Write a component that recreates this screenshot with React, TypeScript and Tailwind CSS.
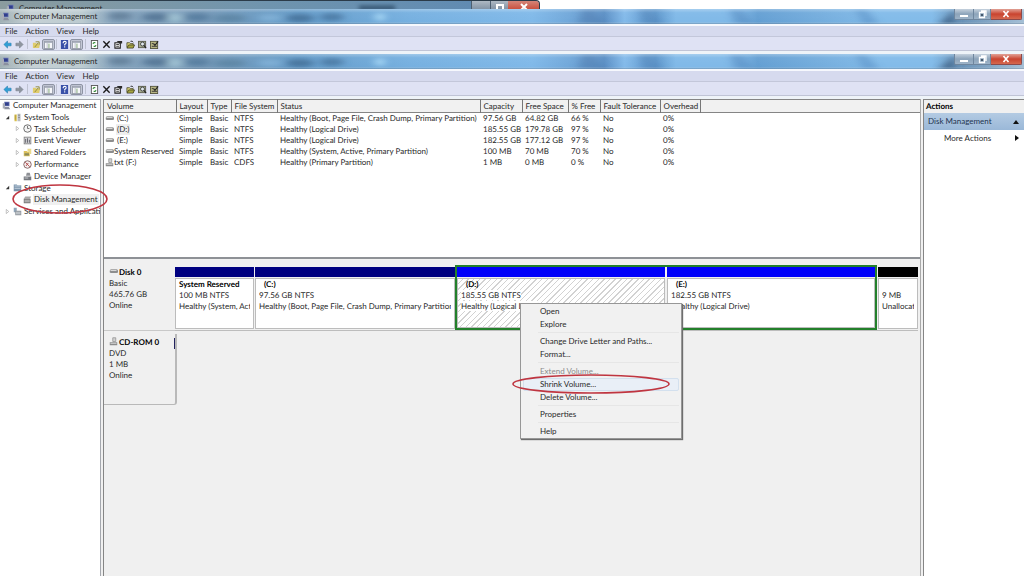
import { Fragment, type ReactNode } from "react";
import clsx from "clsx";

const MENUS = ["File", "Action", "View", "Help"];

const VOLUMES = [
  { name: "(C:)", icon: "drive", fs: "NTFS", status: "Healthy (Boot, Page File, Crash Dump, Primary Partition)", capacity: "97.56 GB", free: "64.82 GB", pct: "66 %" },
  { name: "(D:)", icon: "drive", fs: "NTFS", status: "Healthy (Logical Drive)", capacity: "185.55 GB", free: "179.78 GB", pct: "97 %", selected: true },
  { name: "(E:)", icon: "drive", fs: "NTFS", status: "Healthy (Logical Drive)", capacity: "182.55 GB", free: "177.12 GB", pct: "97 %" },
  { name: "System Reserved", icon: "drive", fs: "NTFS", status: "Healthy (System, Active, Primary Partition)", capacity: "100 MB", free: "70 MB", pct: "70 %" },
  { name: "txt (F:)", icon: "cd", fs: "CDFS", status: "Healthy (Primary Partition)", capacity: "1 MB", free: "0 MB", pct: "0 %" },
];

const COLUMNS = [
  { label: "Volume", width: "w-[72px]" },
  { label: "Layout", width: "w-[31px]" },
  { label: "Type", width: "w-[24px]" },
  { label: "File System", width: "w-[46px]" },
  { label: "Status", width: "w-[203px]" },
  { label: "Capacity", width: "w-[42px]" },
  { label: "Free Space", width: "w-[46px]" },
  { label: "% Free", width: "w-[32px]" },
  { label: "Fault Tolerance", width: "w-[60px]" },
  { label: "Overhead", width: "w-[40px]" },
];

const TREE = [
  { label: "Computer Management", level: 0, arrow: "", icon: "computer" },
  { label: "System Tools", level: 1, arrow: "open", icon: "tools" },
  { label: "Task Scheduler", level: 2, arrow: "closed", icon: "clock" },
  { label: "Event Viewer", level: 2, arrow: "closed", icon: "event" },
  { label: "Shared Folders", level: 2, arrow: "closed", icon: "folder" },
  { label: "Performance", level: 2, arrow: "closed", icon: "perf" },
  { label: "Device Manager", level: 2, arrow: "", icon: "device" },
  { label: "Storage", level: 1, arrow: "open", icon: "storage" },
  { label: "Disk Management", level: 2, arrow: "", icon: "disk", selected: true },
  { label: "Services and Applications", level: 1, arrow: "closed", icon: "services" },
];

const CONTEXT_MENU = [
  ["Open", "Explore"],
  ["Change Drive Letter and Paths...", "Format..."],
  ["Extend Volume...", "Shrink Volume...", "Delete Volume..."],
  ["Properties"],
  ["Help"],
];

const ICONS: Record<string, ReactNode> = {
  computer: (
    <>
      <rect x="3" y="1" width="7" height="6" fill="#6a76b4" />
      <rect x="4" y="2" width="5" height="4" fill="#303f8c" />
      <rect x="1" y="3" width="3" height="7" fill="#a9adb8" />
      <path d="M4 8h5l2 3H3z" fill="#8b90a0" />
    </>
  ),
  tools: (
    <>
      <rect x="2" y="2" width="3" height="9" fill="#d9c04c" />
      <rect x="6" y="1" width="4" height="10" fill="#b9bcc0" />
      <path d="M7 3h2M7 6h2" stroke="#777" />
      <path d="M3 3v6" stroke="#a8903c" />
    </>
  ),
  clock: (
    <>
      <circle cx="6" cy="6" r="5" fill="#f4f4f4" stroke="#6f6f6f" strokeWidth="1.3" />
      <path d="M6 2.5V6h2.5" fill="none" stroke="#555" />
    </>
  ),
  event: (
    <>
      <rect x="1.5" y="1.5" width="9" height="9" fill="#d5d5d8" stroke="#777" />
      <path d="M3.5 4v5M6 3v6M8.5 5v4" stroke="#5d5d66" strokeWidth="1.2" />
    </>
  ),
  folder: (
    <>
      <path d="M1 4h4l1 1h3v6H1z" fill="#dcc15c" />
      <path d="M2 7h6v3H2z" fill="#8d8a58" />
      <path d="M6 1h5v7H8V5H6z" fill="#ead98b" />
    </>
  ),
  perf: (
    <>
      <circle cx="6" cy="6" r="5" fill="#f5eeee" stroke="#8b6a6a" strokeWidth="1.3" />
      <path d="M3 3l6 6M4 8l3-4" stroke="#b24848" strokeWidth="1.2" />
    </>
  ),
  device: (
    <>
      <path d="M5 1h4l1 4H4z" fill="#8d8f94" />
      <rect x="1" y="6" width="10" height="5" fill="#74777d" />
      <path d="M2 8h5" stroke="#dfe2e6" />
    </>
  ),
  storage: (
    <>
      <path d="M1 2h4l1 1h5v8H1z" fill="#7b93ab" />
      <path d="M2 4h8M2 7h8" stroke="#dce7f0" />
    </>
  ),
  disk: (
    <>
      <path d="M3 2h8l-2 3H1z" fill="#a9a9a9" />
      <rect x="1" y="5" width="9" height="6" fill="#777" />
      <path d="M2 7h7M2 9h7" stroke="#d5d5d5" />
    </>
  ),
  services: (
    <>
      <rect x="1" y="1" width="4" height="6" fill="#90a5b8" />
      <rect x="3" y="5" width="8" height="6" fill="#8f959c" />
      <path d="M4 7h6M4 9h6" stroke="#e0e5ea" />
    </>
  ),
  drive: (
    <>
      <path d="M1 5q0-2 2-2h7q2 0 2 2v2q0 1-2 1H3Q1 8 1 7z" fill="#8d8d8d" />
      <path d="M2 4.5h8" stroke="#e4e4e4" strokeWidth="1.3" />
    </>
  ),
  cd: (
    <>
      <path d="M5 1h4v5H5z" fill="#d2d2d2" stroke="#909090" />
      <rect x="1" y="7" width="10" height="4" fill="#8b8b8b" />
      <path d="M2 8.5h8" stroke="#e2e2e2" />
    </>
  ),
};

function Icon({ name, className = "size-[9px]" }: { name: string; className?: string }) {
  return (
    <svg viewBox="0 0 12 12" className={clsx("shrink-0", className)} aria-hidden="true">
      {ICONS[name]}
    </svg>
  );
}

// Aero glass: the blurred desktop behind each title bar
function Glass({ id }: { id: string }) {
  return (
    <svg className="absolute inset-0 size-full" viewBox="0 0 1024 15" preserveAspectRatio="none" aria-hidden="true">
      <defs>
        <linearGradient id={`${id}-base`}>
          <stop offset="0" stopColor="#a0b0b4" />
          <stop offset="0.03" stopColor="#c6d1d5" />
          <stop offset="0.08" stopColor="#bccbd0" />
          <stop offset="0.11" stopColor="#86a4bd" />
          <stop offset="0.2" stopColor="#7599b8" />
          <stop offset="0.29" stopColor="#649bc8" />
          <stop offset="0.4" stopColor="#76b0e0" />
          <stop offset="0.52" stopColor="#80b9e9" />
          <stop offset="0.57" stopColor="#6ba1d4" />
          <stop offset="0.59" stopColor="#5b8fc5" />
          <stop offset="0.61" stopColor="#83baea" />
          <stop offset="0.64" stopColor="#5e97cc" />
          <stop offset="0.66" stopColor="#80b9e8" />
          <stop offset="0.72" stopColor="#80b9e8" />
          <stop offset="0.74" stopColor="#649fd3" />
          <stop offset="0.8" stopColor="#74addd" />
          <stop offset="0.86" stopColor="#82bbe9" />
          <stop offset="0.91" stopColor="#82bbe9" />
          <stop offset="0.94" stopColor="#6a93b8" />
          <stop offset="1" stopColor="#a4bfd6" />
        </linearGradient>
        <linearGradient id={`${id}-shine`} x2="0" y2="1">
          <stop offset="0" stopColor="#fff" stopOpacity="0.3" />
          <stop offset="0.25" stopColor="#fff" stopOpacity="0.04" />
          <stop offset="0.85" stopColor="#fff" stopOpacity="0" />
          <stop offset="1" stopColor="#47627c" stopOpacity="0.5" />
        </linearGradient>
        <filter id={`${id}-blur`} x="-20%" y="-50%" width="140%" height="200%">
          <feGaussianBlur stdDeviation="4 2" />
        </filter>
      </defs>
      <rect width="1024" height="15" fill={`url(#${id}-base)`} />
      <g filter={`url(#${id}-blur)`} opacity="0.75">
        <ellipse cx="120" cy="7" rx="12" ry="4" fill="#587590" />
        <ellipse cx="156" cy="8" rx="14" ry="4" fill="#47698a" />
        <ellipse cx="175" cy="9" rx="7" ry="5" fill="#a9ccd9" />
        <ellipse cx="197" cy="8" rx="13" ry="4" fill="#4c7397" />
        <ellipse cx="230" cy="9" rx="16" ry="4" fill="#57809f" />
        <ellipse cx="270" cy="9" rx="12" ry="4" fill="#83b4da" />
        <ellipse cx="300" cy="9" rx="14" ry="4" fill="#3e6890" />
        <ellipse cx="332" cy="8" rx="12" ry="4" fill="#426f9a" />
        <ellipse cx="380" cy="8" rx="5" ry="4" fill="#b8e6ff" />
        <path d="M582 0h10l14 15h-28z" fill="#5484b8" />
        <path d="M640 0h10l12 15h-20z" fill="#568bc0" />
        <path d="M730 0h12l12 15h-20z" fill="#5b93c8" />
        <path d="M855 0h10l14 15h-16z" fill="#6299cd" />
        <path d="M955 1v14h-16z" fill="#39597c" />
      </g>
      <rect width="1024" height="15" fill={`url(#${id}-shine)`} />
    </svg>
  );
}

function WindowButtons() {
  return (
    <div className="relative mr-[2px] flex h-[11px] self-start">
      <button aria-label="Minimize" className="flex w-[20px] items-end justify-center rounded-bl-[2px] border border-t-0 border-[#6f869e] bg-linear-to-b from-[#c5d1dd] via-[#8da4ba] to-[#9db3c8] pb-[2px]">
        <span className="h-[2px] w-[8px] bg-white" />
      </button>
      <button aria-label="Restore" className="flex w-[17px] items-center justify-center border border-t-0 border-l-0 border-[#6f869e] bg-linear-to-b from-[#c5d1dd] via-[#8da4ba] to-[#9db3c8]">
        <svg viewBox="0 0 9 9" className="size-[9px]" aria-hidden="true">
          <path d="M3 1h5v5M1.5 2.5h5v5h-5z" fill="none" stroke="#fff" strokeWidth="1.3" />
          <rect x="3" y="4" width="2" height="2" fill="#45586c" />
        </svg>
      </button>
      <button aria-label="Close" className="flex w-[31px] items-center justify-center rounded-br-[2px] border border-t-0 border-l-0 border-[#8d4a4a] bg-linear-to-b from-[#e0a095] via-[#c9432f] to-[#d5684f]">
        <svg viewBox="0 0 8 8" className="size-[8px]" aria-hidden="true">
          <path d="M1.5 1l5 6M6.5 1l-5 6" stroke="#fff" strokeWidth="1.6" />
        </svg>
      </button>
    </div>
  );
}

function ToolButton({ label, pressed, children }: { label: string; pressed?: boolean; children: ReactNode }) {
  return (
    <button
      aria-label={label}
      className={clsx(
        "flex h-[11px] items-center justify-center",
        pressed ? "w-[13px] rounded-[2px] border border-[#8d93a3] bg-[#c3c8d6]" : "w-[12px]",
      )}
    >
      <svg viewBox="0 0 10 10" className="size-[9px]" aria-hidden="true">{children}</svg>
    </button>
  );
}

function PanelGlyph() {
  return (
    <>
      <rect x="0.5" y="1.5" width="9" height="8" fill="#f6f7fa" stroke="#9a9fac" />
      <path d="M1 2.5h8" stroke="#8c93a5" />
      <path d="M5.5 4v5" stroke="#7aa46e" />
      <path d="M3.5 3v6" stroke="#b8bdc8" />
    </>
  );
}

function Toolbar() {
  return (
    <div role="toolbar" className="flex h-[14px] items-center border-b border-[#c0c4d6] bg-[#dfe2f4] px-px pt-px">
      <ToolButton label="Back">
        <path d="M1 5l4-4v2.5h4v3H5V9z" fill="#2fa0d6" stroke="#2379ab" strokeWidth="0.6" />
      </ToolButton>
      <ToolButton label="Forward">
        <path d="M9 5L5 1v2.5H1v3h4V9z" fill="#8e959f" stroke="#767d88" strokeWidth="0.6" />
      </ToolButton>
      <span className="mx-[2px] h-[10px] w-px bg-[#bfc3d2]" />
      <ToolButton label="Up One Level">
        <path d="M1 3h3l1 1h4l-1 5H1z" fill="#dfcc6d" />
        <path d="M3 8l4-5M4 2h4v3" fill="none" stroke="#908b3c" />
      </ToolButton>
      <ToolButton label="Show/Hide Console Tree" pressed><PanelGlyph /></ToolButton>
      <span className="mx-px h-[10px] w-px bg-[#bfc3d2]" />
      <ToolButton label="Help">
        <rect x="1" y="0" width="8" height="10" fill="#3850a8" />
        <path d="M3.5 3.5q0-2 1.7-2t1.6 1.6q0 1-1.6 1.9v1M5.2 7v1.4" fill="none" stroke="#fff" strokeWidth="1.2" />
      </ToolButton>
      <ToolButton label="Show/Hide Action Pane" pressed><PanelGlyph /></ToolButton>
      <span className="mx-[2px] h-[10px] w-px bg-[#bfc3d2]" />
      <ToolButton label="Refresh">
        <rect x="1.5" y="0.5" width="7" height="9" fill="#fff" stroke="#555" />
        <path d="M3.5 4.5q0-2 2.5-1.5M6.5 5.5q0 2-2.5 1.5" fill="none" stroke="#348b38" strokeWidth="1.2" />
      </ToolButton>
      <ToolButton label="Delete">
        <path d="M1.5 1.5l7 7M8.5 1.5l-7 7" stroke="#1b1b1b" strokeWidth="1.5" />
      </ToolButton>
      <ToolButton label="Properties">
        <path d="M1 3h6v6H1z" fill="#f2f2f2" stroke="#222" strokeWidth="1.2" />
        <path d="M2.5 5h3M2.5 7h3" stroke="#333" />
        <path d="M3 1h6v3H6z" fill="#2c2c2c" />
      </ToolButton>
      <ToolButton label="Open">
        <path d="M1 3h3l1 1h3v4H1z" fill="#d8d17a" stroke="#3b3b1c" strokeWidth="0.8" />
        <path d="M3 5.5h6.5L8 9H1z" fill="#a7a542" stroke="#33331a" strokeWidth="0.8" />
        <path d="M5 1.5q2-1 3 1" fill="none" stroke="#222" />
      </ToolButton>
      <ToolButton label="Explore">
        <rect x="0.5" y="1.5" width="8" height="7" fill="#a9ae91" stroke="#5a5d4c" />
        <circle cx="5" cy="4.5" r="2.2" fill="#e0e9ec" stroke="#333" strokeWidth="0.9" />
        <path d="M6.5 6l2.5 3" stroke="#222" strokeWidth="1.3" />
      </ToolButton>
      <ToolButton label="Settings">
        <rect x="0.5" y="1.5" width="8" height="8" fill="#b7b583" stroke="#55553c" />
        <path d="M2 4h2M2 7h6" stroke="#333" />
        <path d="M4 4l1.5 2L9 1.5" fill="none" stroke="#222" strokeWidth="1.2" />
      </ToolButton>
    </div>
  );
}

function WindowChrome({ id }: { id: string }) {
  return (
    <header className="bg-[#eef3f8] pb-[3px]">
      <div className="relative flex h-[15px] items-center justify-between">
        <Glass id={id} />
        <div className="relative flex items-center gap-[4px] pl-px">
          <Icon name="computer" />
          <span>Computer Management</span>
        </div>
        <WindowButtons />
      </div>
      <nav className="flex h-[13px] items-center border-t-2 border-b border-t-[#f6f8fd] border-b-[#c3c7da] bg-[#d6daee] pl-[5px]">
        {MENUS.map((m) => (
          <button key={m} className="mr-[8px]">{m}</button>
        ))}
      </nav>
      <Toolbar />
    </header>
  );
}

function BackWindow() {
  return (
    <div className="h-[9px] overflow-hidden bg-white">
      <div className="flex h-[15px] w-[540px] items-start justify-between overflow-hidden rounded-tr-[4px] border-t border-r border-[#2b3b49] bg-linear-to-r from-[#8b9c9f] via-[#6f94ae] to-[#5c88b3]">
        <div className="flex items-center gap-[4px] pt-[2px] pl-[6px]">
          <Icon name="computer" />
          <span>Computer Management</span>
        </div>
        <span className="mr-[76px] ml-auto h-[4px] w-[36px] self-center bg-[#2c4a66] blur-[2px]" />
        <div className="flex h-[11px]">
          <span className="w-[20px] border-x border-[#4c5e70] bg-linear-to-b from-[#aeb9c4] to-[#74869a]" />
          <span className="flex w-[17px] justify-center bg-linear-to-b from-[#aeb9c4] to-[#74869a] pt-[3px]">
            <span className="size-[8px] border-2 border-white" />
          </span>
          <span className="flex w-[31px] justify-center bg-linear-to-b from-[#d58478] to-[#c23a28] pt-[2px]">
            <svg viewBox="0 0 8 8" className="size-[8px]" aria-hidden="true">
              <path d="M1 1l6 6M7 1L1 7" stroke="#fff" strokeWidth="2" />
            </svg>
          </span>
        </div>
      </div>
    </div>
  );
}

function ConsoleTree() {
  return (
    <aside className="w-[101px] shrink-0 overflow-hidden border-t border-r border-[#a5a8ae] bg-white">
      <ul className="grid h-[118px] auto-rows-fr">
        {TREE.map((node) => (
          <li key={node.label} className={clsx("flex items-center pb-px", node.level === 0 && "pl-[2px]", node.level === 1 && "pl-[5px]", node.level === 2 && "pl-[15px]")}>
            {node.level > 0 && (
              <svg viewBox="0 0 6 6" className="mr-[3px] size-[5px] shrink-0" aria-hidden="true">
                {node.arrow === "open" && <path d="M5 1v4H1z" fill="#333" />}
                {node.arrow === "closed" && <path d="M1.5 0.5l3 2.5-3 2.5z" fill="#fff" stroke="#a5a5a5" strokeWidth="0.8" />}
              </svg>
            )}
            <Icon name={node.icon} />
            <button className={clsx("ml-px px-px whitespace-nowrap", node.selected && "bg-[#f0f0f0]")}>{node.label}</button>
          </li>
        ))}
      </ul>
    </aside>
  );
}

function VolumeList() {
  return (
    <section className="h-[160px] overflow-hidden border-b-2 border-[#8e9196] bg-white">
      <table className="w-full table-fixed border-collapse text-left whitespace-nowrap">
        <thead>
          <tr className="h-[13px] border-y border-[#858585] bg-[#f1f1f1]">
            {COLUMNS.map((c) => (
              <th key={c.label} scope="col" className={clsx("border-r border-[#777] p-0 pl-[3px] font-normal", c.width)}>{c.label}</th>
            ))}
            <th className="p-0" />
          </tr>
        </thead>
        <tbody>
          {VOLUMES.map((v) => (
            <tr key={v.name} className="h-[11px]">
              <td className="p-0">
                <span className="flex items-center pl-px">
                  <Icon name={v.icon} />
                  <span className={clsx(v.name.startsWith("(") && "ml-[2px] px-px", v.selected && "bg-[#eeeeee]")}>{v.name}</span>
                </span>
              </td>
              <td className="p-0 pl-[3px]">Simple</td>
              <td className="p-0 pl-[3px]">Basic</td>
              <td className="p-0 pl-[3px]">{v.fs}</td>
              <td className="p-0 pl-[3px]">{v.status}</td>
              <td className="p-0 pl-[3px]">{v.capacity}</td>
              <td className="p-0 pl-[3px]">{v.free}</td>
              <td className="p-0 pl-[3px]">{v.pct}</td>
              <td className="p-0 pl-[3px]">No</td>
              <td className="p-0 pl-[3px]">0%</td>
              <td />
            </tr>
          ))}
        </tbody>
      </table>
    </section>
  );
}

function DiskLabel({ icon, title, lines }: { icon: string; title: string; lines: string[] }) {
  return (
    <div className="pt-[2px] pl-[5px] leading-[11px]">
      <div className="flex h-[11px] items-center gap-px">
        <Icon name={icon} className="mb-[3px] size-[9px]" />
        <span className="font-bold text-black">{title}</span>
      </div>
      {lines.map((l) => (
        <div key={l}>{l}</div>
      ))}
    </div>
  );
}

interface PartitionProps {
  className: string;
  bar: string;
  title?: string;
  lines: string[];
  hatched?: boolean;
}

function Partition({ className, bar, title, lines, hatched }: PartitionProps) {
  return (
    <div className={clsx("flex min-w-0 basis-0 flex-col gap-px", className)}>
      <div className={clsx("h-[10px]", bar)} />
      <div
        className={clsx(
          "flex-1 border border-[#bcbcbc] px-[3px] leading-[11px] whitespace-nowrap",
          hatched ? "bg-[repeating-linear-gradient(135deg,#fff_0px,#fff_3px,#d2d2d2_3px,#d2d2d2_4px)]" : "bg-white",
        )}
      >
        <div className={clsx("h-[11px] font-bold text-black", title?.startsWith("(") && "pl-[5px]")}>{title}</div>
        {lines.map((l) => (
          <div key={l} className="overflow-hidden"><span className={clsx(hatched && "bg-white")}>{l}</span></div>
        ))}
      </div>
    </div>
  );
}

function DiskView() {
  return (
    <section className="flex-1 bg-[#f0f0f0] pt-[6px]">
      <div className="flex h-[66px]">
        <div className="w-[71px] shrink-0 border-b border-[#c9c9c9]">
          <DiskLabel icon="drive" title="Disk 0" lines={["Basic", "465.76 GB", "Online"]} />
        </div>
        <div className="mr-[2px] flex min-w-0 flex-1 border-b border-[#bdbdbd]">
          <div className="flex min-w-0 grow-280 basis-0 gap-px pt-[2px] pb-px">
            <Partition className="grow-79" bar="bg-[#000080]" title="System Reserved" lines={["100 MB NTFS", "Healthy (System, Active, Primary Partition)"]} />
            <Partition className="grow-200" bar="bg-[#000080]" title="(C:)" lines={["97.56 GB NTFS", "Healthy (Boot, Page File, Crash Dump, Primary Partition)"]} />
          </div>
          {/* extended partition */}
          <div className="flex min-w-0 grow-418 basis-0 gap-[2px] border-2 border-[#23802b]">
            <Partition className="grow" bar="bg-[#0000fa]" title="(D:)" lines={["185.55 GB NTFS", "Healthy (Logical Drive)"]} hatched />
            <Partition className="grow" bar="bg-[#0000fa]" title="(E:)" lines={["182.55 GB NTFS", "Healthy (Logical Drive)"]} />
          </div>
          <div className="flex min-w-0 grow-40 basis-0 pt-[2px] pb-px pl-px">
            <Partition className="grow" bar="bg-black" lines={["9 MB", "Unallocated"]} />
          </div>
        </div>
      </div>
      <div className="mt-[3px] flex h-[71px] w-[73px] justify-between rounded-br-[3px] border-r-2 border-b border-[#b9b9b9] pt-px">
        <DiskLabel icon="cd" title="CD-ROM 0" lines={["DVD", "1 MB", "Online"]} />
        <span className="mt-[3px] h-[11px] w-px bg-[#22225e]" />
      </div>
    </section>
  );
}

function ActionsPane() {
  return (
    <aside className="w-[101px] shrink-0 border-t border-l border-[#858585] bg-white">
      <h2 className="h-[13px] bg-[#f0f0f0] pl-[2px] leading-[13px] font-bold text-black">Actions</h2>
      <button className="flex h-[17px] w-full items-center justify-between bg-linear-to-b from-[#b4cbe3] to-[#9ab8d8] pr-[5px] pl-[4px] text-[#1e3350]">
        Disk Management
        <svg viewBox="0 0 6 4" className="h-[4px] w-[6px]" aria-hidden="true"><path d="M3 0l3 4H0z" fill="#111" /></svg>
      </button>
      <button className="flex h-[17px] w-full items-center justify-between pr-[5px] pb-px pl-[20px]">
        More Actions
        <svg viewBox="0 0 4 6" className="h-[6px] w-[4px]" aria-hidden="true"><path d="M0 0l4 3-4 3z" fill="#111" /></svg>
      </button>
    </aside>
  );
}

function ContextMenu() {
  return (
    <div role="menu" className="absolute top-[303px] left-[520px] w-[162px] border border-[#979797] bg-[#f1f1f1] px-[2px] pt-px shadow-[1px_1px_1px_#6e6e6e]">
      {CONTEXT_MENU.map((group, i) => (
        <Fragment key={group[0]}>
          {i > 0 && <div className="mt-px mb-[2px] ml-[15px] h-px bg-[#e6e6e6]" />}
          {group.map((item) => (
            <button
              key={item}
              role="menuitem"
              disabled={item.startsWith("Extend")}
              className="block h-[13px] w-full rounded-[2px] pl-[17px] text-left leading-[13px] disabled:text-[#8c8c8c] data-[hot=true]:bg-[#e9eff7] data-[hot=true]:outline data-[hot=true]:-outline-offset-1 data-[hot=true]:outline-[#d3e0ee]"
              data-hot={item.startsWith("Shrink")}
            >
              {item}
            </button>
          ))}
        </Fragment>
      ))}
    </div>
  );
}

export default function App() {
  return (
    <div className="relative flex min-h-screen flex-col bg-[#f0f0f0] font-['Lato',sans-serif] text-[8px] leading-[11px] text-[#2a2a2a] [text-rendering:geometricPrecision]">
      <BackWindow />
      <WindowChrome id="back" />
      <WindowChrome id="front" />
      <div className="flex flex-1">
        <ConsoleTree />
        <main className="ml-[2px] flex min-w-0 flex-1 flex-col border-l border-[#858585]">
          <VolumeList />
          <DiskView />
        </main>
        <div className="w-[3px] border-l border-[#a9a9a9] bg-[#f0f0f0]" />
        <ActionsPane />
      </div>
      <ContextMenu />
      {/* hand-drawn markers */}
      <svg viewBox="0 0 96 30" className="pointer-events-none absolute top-[184px] left-[12px] h-[30px] w-[96px]" aria-hidden="true">
        <ellipse cx="48" cy="15" rx="47" ry="14" fill="none" stroke="#bf3540" strokeWidth="1.6" />
      </svg>
      <svg viewBox="0 0 160 20" className="pointer-events-none absolute top-[374px] left-[511px] h-[20px] w-[160px]" aria-hidden="true">
        <ellipse cx="80" cy="10" rx="78" ry="9" fill="none" stroke="#bf3540" strokeWidth="1.6" />
      </svg>
    </div>
  );
}
